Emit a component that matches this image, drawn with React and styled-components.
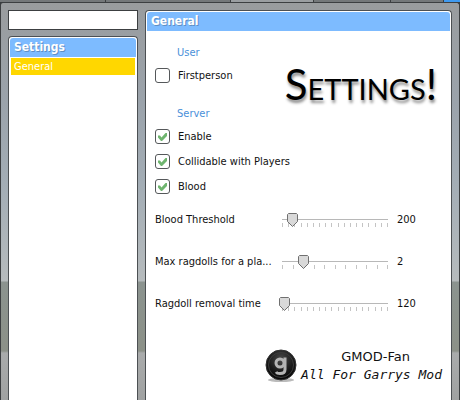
import React, { useState } from 'react';
import styled, { createGlobalStyle } from 'styled-components';

const GlobalStyle = createGlobalStyle`
  * {
    box-sizing: border-box;
  }

  body {
    margin: 0;
    overflow: hidden;
    background: #3a3d3f;
    color: #111;
    font-family: 'DejaVu Sans Condensed', 'Noto Sans', sans-serif;
    font-size: 11px;
    line-height: 16px;
  }
`;

const Screen = styled.div`
  display: flex;
  flex-direction: column;
  height: 100vh;
`;

const TabStrip = styled.div`
  display: flex;
  flex: none;
  height: 2px;
  background: #3f9af0;
`;

const Tab = styled.span`
  flex: ${props => props.$grow} 1 0;
  border-right: 1px solid #3c3f41;
  background: ${props => (props.$active ? '#9a9ea1' : '#74787a')};
`;

const TabEnd = styled.span`
  width: 16px;
`;

const Frame = styled.div`
  display: flex;
  flex: 1;
  gap: 7px;
  min-height: 0;
  padding: 7px 7px 0;
  border: 1px solid #3c3f41;
  border-bottom: 0;
  border-radius: 3px 3px 0 0;
  background: linear-gradient(
    #999c9e 0,
    #9ba3ab 100px,
    #a3adb5 180px,
    #b6bbbd 278px,
    #8b938f 279px,
    #8c9188 348px,
    #a9abab 350px,
    #9fa1a1 400px
  );
`;

const Sidebar = styled.aside`
  display: flex;
  flex: 0 0 130px;
  flex-direction: column;
  gap: 6px;
`;

const SearchInput = styled.input`
  width: 100%;
  height: 20px;
  padding: 0 4px;
  border: 1px solid #3c3f41;
  border-radius: 0;
  background: #fff;
  font: inherit;
`;

const Panel = styled.section`
  flex: 1;
  min-width: 0;
  padding: 1px;
  border: 1px solid #4c5053;
  border-bottom: 0;
  border-radius: 4px 4px 0 0;
  background: #fff;
`;

const PanelTitle = styled.h2`
  height: 19px;
  margin: 0;
  padding: 0 4px;
  border-radius: 3px 3px 0 0;
  background: #7dbbff;
  color: #fff;
  font-size: 12px;
  line-height: 19px;
  text-shadow: 1px 1px 0 #5f8fc4;
`;

const MenuItem = styled.button`
  display: block;
  width: calc(100% - 2px);
  height: 17px;
  margin: 1px;
  padding: 0 3px;
  border: 0;
  background: #ffd700;
  color: #fff;
  font: inherit;
  text-align: left;
`;

const Content = styled.div`
  position: relative;
  padding: 14px 8px;
`;

const GroupTitle = styled.h3`
  height: 16px;
  margin: 0 0 2px 22px;
  color: #4a90d9;
  font-size: 11px;
  font-weight: 400;
`;

const Group = styled.div`
  & + & {
    margin-top: 18px;
  }
`;

const CheckRow = styled.label`
  display: flex;
  align-items: center;
  gap: 8px;
  height: 25px;
`;

const Tick = styled.svg`
  width: 15px;
  height: 15px;
  grid-area: 1 / 1;
  pointer-events: none;
`;

const CheckBox = styled.span`
  display: grid;
`;

const CheckInput = styled.input`
  width: 15px;
  height: 15px;
  margin: 0;
  grid-area: 1 / 1;
  appearance: none;
  border: 1px solid #55585a;
  border-radius: 3px;
  background: #fff;
`;

const SliderRow = styled.div`
  display: grid;
  grid-template-columns: 119px 117px 1fr;
  column-gap: 3px;
  align-items: center;
  height: 42px;
`;

const SliderLabel = styled.label`
  white-space: nowrap;
`;

const SliderTrack = styled.div`
  display: grid;
  height: 14px;
`;

const Ticks = styled.svg`
  width: 117px;
  height: 14px;
  grid-area: 1 / 1;
`;

const thumb = encodeURIComponent(
  '<svg xmlns="http://www.w3.org/2000/svg" width="11" height="14"><path d="M1.5 .5h8l1 1v7l-5 5-5-5v-7z" fill="#d9d9d9" stroke="#707070"/></svg>'
);

const SliderInput = styled.input`
  width: 117px;
  height: 14px;
  margin: 0;
  grid-area: 1 / 1;
  appearance: none;
  background: none;

  &::-webkit-slider-thumb {
    width: 11px;
    height: 14px;
    appearance: none;
    background: url('data:image/svg+xml,${thumb}') no-repeat;
  }
`;

const Banner = styled.div`
  position: absolute;
  top: 27px;
  right: 13px;
  color: #000;
  font-family: Lato, sans-serif;
  font-size: 42px;
  font-variant: small-caps;
  line-height: 52px;
  text-shadow: 1px 3px 3px rgba(0, 0, 0, 0.45);
`;

const Credits = styled.footer`
  display: flex;
  align-items: center;
  justify-content: flex-end;
  gap: 4px;
  margin-top: 23px;
`;

const CreditsText = styled.div`
  display: flex;
  flex-direction: column;
  color: #111;
`;

const SiteName = styled.span`
  padding-left: 8px;
  font-family: 'DejaVu Sans', sans-serif;
  font-size: 13px;
  line-height: 18px;
  text-align: center;
`;

const Tagline = styled.span`
  font-family: 'DejaVu Sans Mono', monospace;
  font-size: 13px;
  font-style: italic;
  line-height: 18px;
`;

const Check = ({ label, defaultChecked = false }) => {
  const [checked, setChecked] = useState(defaultChecked);

  return (
    <CheckRow>
      <CheckBox>
        <CheckInput type="checkbox" checked={checked} onChange={e => setChecked(e.target.checked)} />
        {checked && (
          <Tick viewBox="0 0 15 15" aria-hidden="true">
            <path d="M3 6.5h2l1.500 2L10.500 4H12v3l-5 5H6L3 8.500z" fill="#6fb56f" />
          </Tick>
        )}
      </CheckBox>
      {label}
    </CheckRow>
  );
};

const Slider = ({ id, label, max, steps, initial }) => {
  const [value, setValue] = useState(initial);
  const marks = Array.from({ length: steps + 1 }, (_, i) => Math.round((i * 105) / steps) + 5.5);

  return (
    <SliderRow>
      <SliderLabel htmlFor={id}>{label}</SliderLabel>
      <SliderTrack>
        <Ticks aria-hidden="true">
          <path d="M5 6.5h106" stroke="#b8b8b8" />
          {marks.map(x => (
            <path key={x} d={`M${x} 10v5`} stroke="#c4c4c4" />
          ))}
        </Ticks>
        <SliderInput
          id={id}
          type="range"
          min="0"
          max={max}
          value={value}
          onChange={e => setValue(e.target.value)}
        />
      </SliderTrack>
      <output htmlFor={id}>{value}</output>
    </SliderRow>
  );
};

const Logo = () => (
  <svg width="32" height="34" viewBox="0 0 32 34" aria-hidden="true">
    <defs>
      <radialGradient id="ball" cx="50%" cy="30%" r="70%">
        <stop offset="0" stopColor="#4a4a4a" />
        <stop offset="0.6" stopColor="#1a1a1a" />
        <stop offset="1" stopColor="#050505" />
      </radialGradient>
    </defs>
    <ellipse cx="16" cy="31" rx="13" ry="2" fill="#bbb" />
    <circle cx="16" cy="16" r="15" fill="url(#ball)" stroke="#333" />
    <circle cx="16" cy="16" r="12.500" fill="none" stroke="#3c3c3c" />
    <circle cx="15" cy="14" r="4" fill="none" stroke="#b4b4b4" strokeWidth="3" />
    <path d="M20 8.500v12q0 4-5 4-3 0-4-1.500" fill="none" stroke="#b4b4b4" strokeWidth="3" />
  </svg>
);

const App = () => (
  <>
    <GlobalStyle />
    <Screen>
      <TabStrip>
        <Tab $grow={106} />
        <Tab $grow={126} />
        <Tab $grow={83} $active />
        <Tab $grow={76} />
        <Tab $grow={53} />
        <TabEnd />
      </TabStrip>
      <Frame>
        <Sidebar>
          <SearchInput type="text" aria-label="Search" />
          <Panel>
            <PanelTitle>Settings</PanelTitle>
            <MenuItem type="button">General</MenuItem>
          </Panel>
        </Sidebar>
        <Panel as="main">
          <PanelTitle>General</PanelTitle>
          <Content>
            <Group>
              <GroupTitle>User</GroupTitle>
              <Check label="Firstperson" />
            </Group>
            <Group>
              <GroupTitle>Server</GroupTitle>
              <Check label="Enable" defaultChecked />
              <Check label="Collidable with Players" defaultChecked />
              <Check label="Blood" defaultChecked />
            </Group>
            <Slider id="threshold" label="Blood Threshold" max={2200} steps={17} initial={200} />
            <Slider id="ragdolls" label="Max ragdolls for a pla..." max={10} steps={10} initial={2} />
            <Slider id="removal" label="Ragdoll removal time" max={6000} steps={17} initial={120} />
            <Banner>Settings!</Banner>
            <Credits>
              <Logo />
              <CreditsText>
                <SiteName>GMOD-Fan</SiteName>
                <Tagline>All For Garrys Mod</Tagline>
              </CreditsText>
            </Credits>
          </Content>
        </Panel>
      </Frame>
    </Screen>
  </>
);

export default App;
